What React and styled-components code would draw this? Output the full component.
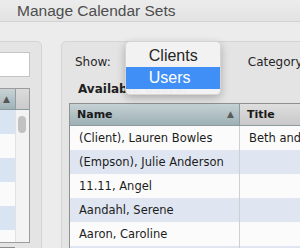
import React from 'react';
import styled, { createGlobalStyle } from 'styled-components';

const GlobalStyle = createGlobalStyle`
    html, body {
        margin: 0;
        padding: 0;
        background: #ececec;
        overflow: hidden;
    }
`;

const users = [
    { name: '(Client), Lauren Bowles', title: 'Beth and' },
    { name: '(Empson), Julie Anderson', title: '' },
    { name: '11.11, Angel', title: '' },
    { name: 'Aandahl, Serene', title: '' },
    { name: 'Aaron, Caroline', title: '' },
    { name: 'Abbott, Kim', title: '' },
];

const App = () => {
    return (
        <Window>
            <GlobalStyle />
            <TitleBar>Manage Calendar Sets</TitleBar>
            <Body>
                <LeftPanel>
                    <Field />
                    <SetTable>
                        <SetHeader>
                            <SortCell>▲</SortCell>
                            <CornerCell />
                        </SetHeader>
                        <SetBody>
                            <SetRows>
                                {[0, 1, 2, 3, 4, 5].map((i) => (
                                    <SetRow key={i} $alt={i % 2 === 0} />
                                ))}
                            </SetRows>
                            <Track>
                                <Thumb />
                            </Track>
                        </SetBody>
                    </SetTable>
                    <ButtonBar />
                </LeftPanel>

                <RightPanel>
                    <ShowRow>
                        <Label>Show:</Label>
                        <PopupSlot>
                            <Menu>
                                <MenuItem>Clients</MenuItem>
                                <MenuItem $active>Users</MenuItem>
                            </Menu>
                        </PopupSlot>
                        <Label>Category</Label>
                    </ShowRow>
                    <Heading>Available Users:</Heading>
                    <Table>
                        <HeadRow>
                            <HeadCell $sorted $width={170}>
                                Name
                                <Arrow>▲</Arrow>
                            </HeadCell>
                            <HeadCell>Title</HeadCell>
                        </HeadRow>
                        {users.map((u, i) => (
                            <Row key={u.name} $alt={i % 2 === 1}>
                                <Cell $width={170}>{u.name}</Cell>
                                <Cell>{u.title}</Cell>
                            </Row>
                        ))}
                    </Table>
                </RightPanel>
            </Body>
        </Window>
    );
};

const Window = styled.div`
    width: 300px;
    height: 248px;
    overflow: hidden;
    background: #ececec;
    font-family: 'DejaVu Sans', 'Liberation Sans', sans-serif;
`;

const TitleBar = styled.div`
    height: 22px;
    box-sizing: border-box;
    border-bottom: 1px solid #d2d2d2;
    background: linear-gradient(#ececec, #e3e3e3);
    padding-left: 17px;
    font-family: 'Liberation Sans', Arial, sans-serif;
    font-size: 15.5px;
    line-height: 22px;
    color: #4d4d4d;
    white-space: nowrap;
`;

const Body = styled.div`
    display: flex;
    gap: 19px;
    padding-top: 19px;
`;

const Panel = styled.div`
    background: #e4e4e4;
    border: 1px solid #d4d4d4;
    border-radius: 5px;
    height: 240px;
    box-sizing: border-box;
    flex-shrink: 0;
`;

const LeftPanel = styled(Panel)`
    width: 61px;
    margin-left: -19px;
    padding: 10px 11px 0 8px;
`;

const Field = styled.div`
    height: 25px;
    box-sizing: border-box;
    margin-left: -20px;
    background: #fff;
    border: 1px solid #c4c4c4;
`;

const SetTable = styled.div`
    margin-top: 11px;
    margin-left: -20px;
    border: 1px solid #9c9c9c;
    border-left: none;
    height: 155px;
    box-sizing: border-box;
    display: flex;
    flex-direction: column;
    overflow: hidden;
`;

const SetHeader = styled.div`
    display: flex;
    height: 21px;
    flex-shrink: 0;
    border-bottom: 1px solid #8a9a9f;
    box-sizing: border-box;
`;

const SortCell = styled.div`
    width: 46px;
    flex-shrink: 0;
    box-sizing: border-box;
    background: linear-gradient(#c9d3d6, #a0b2b7);
    border-right: 1px solid #8f9ea2;
    font-size: 9px;
    color: #555;
    text-align: right;
    padding-right: 5px;
    line-height: 20px;
`;

const CornerCell = styled.div`
    flex: 1;
    background: linear-gradient(#dcdcdc, #cacaca);
`;

const SetBody = styled.div`
    display: flex;
    flex: 1;
`;

const SetRows = styled.div`
    width: 45px;
    flex-shrink: 0;
    display: flex;
    flex-direction: column;
`;

const SetRow = styled.div`
    height: 24px;
    flex-shrink: 0;
    background: ${(p) => (p.$alt ? '#d9e4f3' : '#fafafa')};
`;

const Track = styled.div`
    flex: 1;
    background: #f3f3f3;
    border-left: 1px solid #e2e2e2;
    padding: 6px 0 0 2px;
`;

const Thumb = styled.div`
    width: 8px;
    height: 17px;
    border-radius: 4px;
    background: #c2c2c2;
`;

const ButtonBar = styled.div`
    margin: 4px 0 0 -20px;
    width: 45px;
    height: 10px;
    border-top: 1px solid #8d8d8d;
    background: #f5f5f5;
`;

const RightPanel = styled(Panel)`
    width: 280px;
    padding-left: 13px;
    padding-top: 8px;
`;

const ShowRow = styled.div`
    display: flex;
    align-items: center;
    height: 24px;
`;

const Label = styled.span`
    font-size: 12px;
    color: #262626;
    white-space: nowrap;
`;

const PopupSlot = styled.div`
    position: relative;
    width: 137px;
    flex-shrink: 0;
    align-self: stretch;
`;

const Menu = styled.div`
    position: absolute;
    left: 14px;
    top: -9px;
    width: 96px;
    padding: 3px 0 5px;
    box-sizing: border-box;
    background: rgba(242, 242, 242, 0.98);
    border: 1px solid rgba(0, 0, 0, 0.12);
    border-radius: 5px;
    box-shadow: 0 3px 9px rgba(0, 0, 0, 0.25);
    z-index: 2;
`;

const MenuItem = styled.div`
    height: 22px;
    line-height: 22px;
    padding-left: 23px;
    font-family: 'Liberation Sans', Arial, sans-serif;
    font-size: 16px;
    color: ${(p) => (p.$active ? '#fff' : '#262626')};
    background: ${(p) => (p.$active ? '#3f8ff6' : 'transparent')};
`;

const Heading = styled.div`
    margin-top: 7px;
    padding-left: 3px;
    font-size: 12px;
    font-weight: bold;
    line-height: 16px;
    color: #1f1f1f;
    white-space: nowrap;
`;

const Table = styled.div`
    margin-top: 6px;
    margin-left: -6px;
    width: 260px;
    border: 1px solid #8f8f8f;
    border-right: none;
    background: #fff;
`;

const HeadRow = styled.div`
    display: flex;
    height: 21px;
    border-bottom: 1px solid #8d9a9e;
`;

const HeadCell = styled.div`
    position: relative;
    width: ${(p) => (p.$width ? `${p.$width}px` : 'auto')};
    flex: ${(p) => (p.$width ? '0 0 auto' : '1')};
    box-sizing: border-box;
    padding-left: 7px;
    font-size: 11px;
    font-weight: bold;
    line-height: 21px;
    color: #1a1a1a;
    background: ${(p) =>
        p.$sorted
            ? 'linear-gradient(#c6d1d4, #9db0b5)'
            : 'linear-gradient(#dedede, #c9c9c9)'};
    border-right: ${(p) => (p.$sorted ? '1px solid #8e9ca0' : 'none')};
`;

const Arrow = styled.span`
    position: absolute;
    right: 5px;
    top: 0;
    font-size: 9px;
    font-weight: normal;
    color: #5a5a5a;
`;

const Row = styled.div`
    display: flex;
    height: 24px;
    background: ${(p) => (p.$alt ? '#dfe6f1' : '#fbfbfb')};
`;

const Cell = styled.div`
    width: ${(p) => (p.$width ? `${p.$width}px` : 'auto')};
    flex: ${(p) => (p.$width ? '0 0 auto' : '1')};
    box-sizing: border-box;
    padding-left: 9px;
    font-size: 11.5px;
    line-height: 24px;
    color: #1c1c1c;
    white-space: nowrap;
    overflow: hidden;
    border-right: ${(p) => (p.$width ? '1px solid #cfcfcf' : 'none')};
`;

export default App;
